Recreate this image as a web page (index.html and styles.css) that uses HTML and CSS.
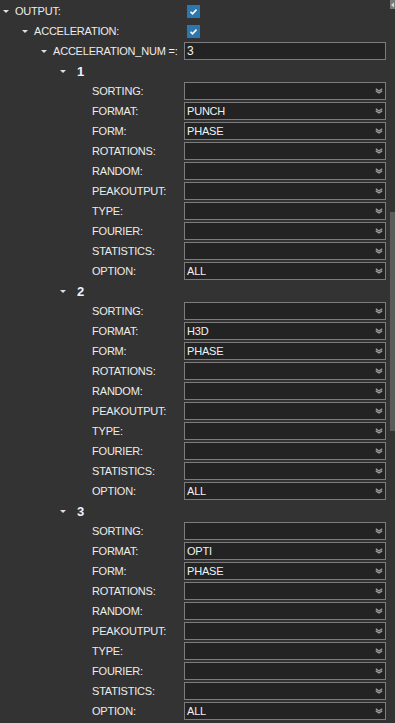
FILE: index.html
```html
<!DOCTYPE html>
<html>
<head>
<meta charset="utf-8">
<link rel="stylesheet" href="styles.css">
</head>
<body>
<div class="panel">
  <div class="tree" id="tree">
    <div class="row l0"><span class="tw"></span><span class="name">OUTPUT:</span><span class="val cb"><span class="box"><svg width="13" height="13" viewBox="0 0 13 13"><polyline points="3.5,6.8 5.5,8.8 9.5,4.6" fill="none" stroke="#fff" stroke-width="1.6"/></svg></span></span></div>
    <div class="row l1"><span class="tw"></span><span class="name">ACCELERATION:</span><span class="val cb"><span class="box"><svg width="13" height="13" viewBox="0 0 13 13"><polyline points="3.5,6.8 5.5,8.8 9.5,4.6" fill="none" stroke="#fff" stroke-width="1.6"/></svg></span></span></div>
    <div class="row l2"><span class="tw"></span><span class="name">ACCELERATION_NUM =:</span><span class="val field">3</span></div>
  </div>
  <div class="scrollbar">
    <div class="sb-up"><svg width="5" height="9" viewBox="0 0 5 9"><polygon points="1,5 4,2.5 4,7.5" fill="#d8d8d8"/></svg></div>
    <div class="sb-thumb"></div>
  </div>
</div>
<script src="app.js"></script>
</body>
</html>
```
FILE: app.js
```js
(function () {
  var groups = [
    { n: "1", format: "PUNCH", form: "PHASE", option: "ALL" },
    { n: "2", format: "H3D", form: "PHASE", option: "ALL" },
    { n: "3", format: "OPTI", form: "PHASE", option: "ALL" }
  ];
  var fields = ["SORTING", "FORMAT", "FORM", "ROTATIONS", "RANDOM", "PEAKOUTPUT", "TYPE", "FOURIER", "STATISTICS", "OPTION"];
  var chev = '<svg class="chev" width="8" height="6" viewBox="0 0 8 6"><polyline points="0.8,0.8 4,3 7.2,0.8" fill="none" stroke="#9a9a9a" stroke-width="1.4"/><polyline points="0.8,2.8 4,5 7.2,2.8" fill="none" stroke="#9a9a9a" stroke-width="1.4"/></svg>';
  var tree = document.getElementById("tree");
  var html = "";
  groups.forEach(function (g) {
    html += '<div class="row l3"><span class="tw"></span><span class="num">' + g.n + '</span></div>';
    fields.forEach(function (f) {
      var v = "";
      if (f === "FORMAT") v = g.format;
      if (f === "FORM") v = g.form;
      if (f === "OPTION") v = g.option;
      html += '<div class="row l4"><span class="name">' + f + ':</span><span class="val sel"><span class="txt">' + v + '</span>' + chev + '</span></div>';
    });
  });
  tree.insertAdjacentHTML("beforeend", html);
})();
```
FILE: styles.css
```css
html, body {
  margin: 0;
  padding: 0;
  background: #333333;
}
body {
  font-family: "Liberation Sans", Arial, sans-serif;
  font-size: 11px;
  letter-spacing: -0.2px;
  color: #ececec;
  width: 395px;
  height: 723px;
  overflow: hidden;
}
.panel {
  display: flex;
  height: 723px;
}
.tree {
  flex: 1;
  padding-top: 1px;
  padding-right: 4px;
}
.row {
  display: flex;
  align-items: center;
  height: 20px;
}
.tw {
  flex: none;
  width: 12px;
  display: flex;
  align-items: center;
}
.tw::before {
  content: "";
  display: block;
  width: 0;
  height: 0;
  margin-top: 1px;
  border-left: 3px solid transparent;
  border-right: 3px solid transparent;
  border-top: 3px solid #e0e0e0;
}
.l0 { padding-left: 3px; }
.l1 { padding-left: 22px; }
.l2 { padding-left: 41px; }
.l3 { padding-left: 60px; }
.l3 .tw { width: 17px; }
.l4 { padding-left: 92px; }
.name {
  flex: 1;
  white-space: nowrap;
}
.num {
  font-weight: bold;
  font-size: 13px;
  color: #eef2ff;
  padding-top: 1px;
}
.val {
  flex: none;
  width: 202px;
  height: 18px;
  box-sizing: border-box;
  display: flex;
  align-items: center;
}
.cb {
  padding-left: 3px;
}
.box {
  width: 13px;
  height: 13px;
  background: #2a78ae;
  display: block;
}
.box svg { display: block; }
.field, .sel {
  border: 1px solid #7c7c7c;
  background: #232323;
  padding-left: 2px;
  color: #f2f2f2;
  font-size: 11px;
}
.field {
  font-size: 12px;
  color: #f4f4f4;
}
.sel .txt {
  flex: 1;
}
.chev {
  display: block;
  margin-right: 2px;
}
.scrollbar {
  flex: none;
  width: 5px;
  display: flex;
  flex-direction: column;
}
.sb-up {
  height: 9px;
  background: #7a7a7a;
}
.sb-up svg { display: block; }
.sb-thumb {
  margin-top: 203px;
  height: 219px;
  background: #5b5b5b;
}
```
